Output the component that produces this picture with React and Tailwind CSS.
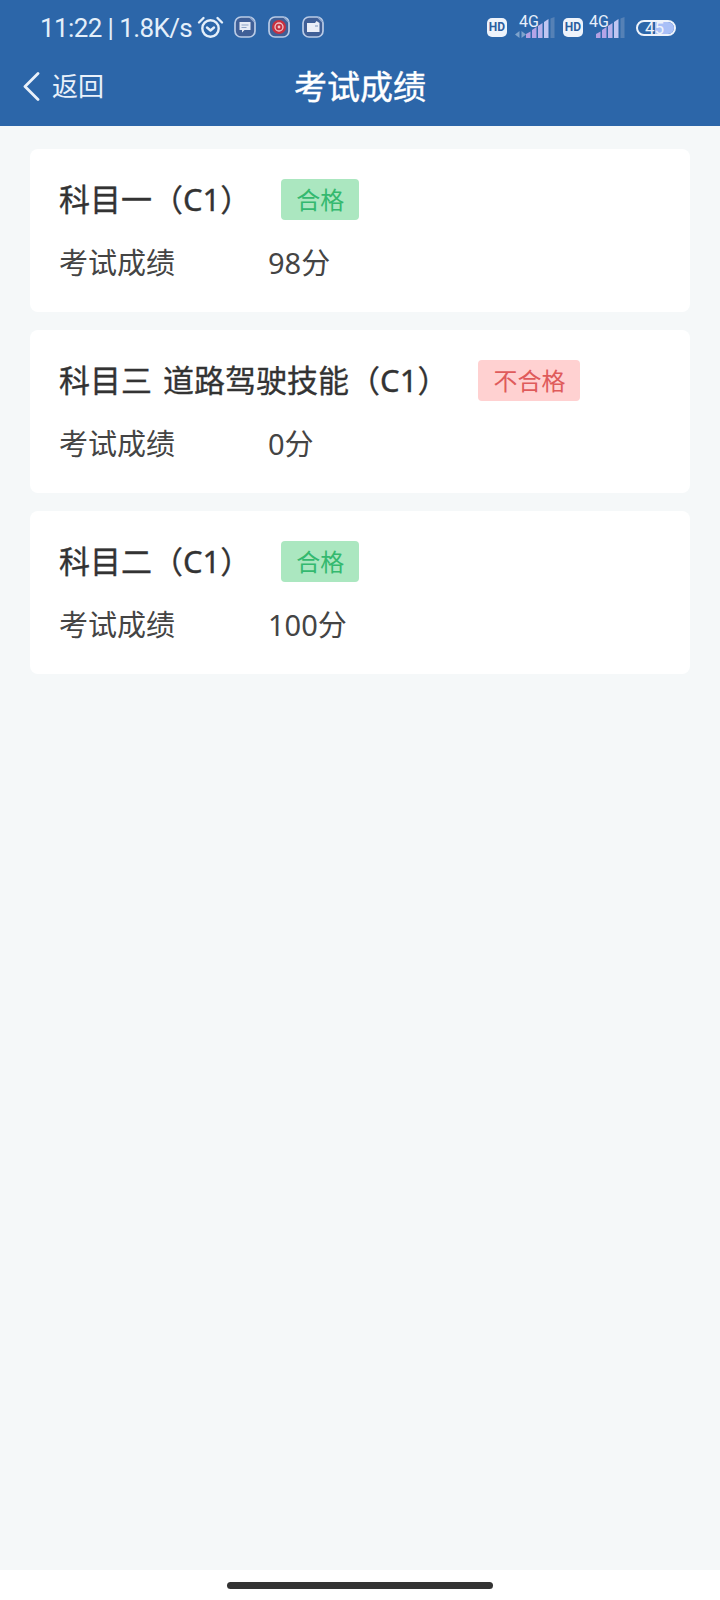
import React from "react";

const CJK = '"Noto Sans", "Noto Sans CJK SC", sans-serif';

const records = [
  { name: "科目一（C1）", score: "98分", passed: true },
  { name: "科目三 道路驾驶技能（C1）", score: "0分", passed: false },
  { name: "科目二（C1）", score: "100分", passed: true },
];

function Alarm() {
  return (
    <svg width="27" height="22" viewBox="0 0 27 22" fill="none" stroke="#e4effa" strokeWidth="2.4" strokeLinecap="round" strokeLinejoin="round">
      <circle cx="13.5" cy="12.5" r="8.2" />
      <path d="M10 11.5l3.5 3 3.5-3" />
      <path d="M2 6.5 6.5 2M25 6.5 20.5 2" />
    </svg>
  );
}

function AppTile({ children }) {
  return (
    <svg width="22" height="22" viewBox="0 0 22 22" fill="none">
      <rect x="1" y="1" width="20" height="20" rx="6" fill="#3f5f97" stroke="#b9cbe6" strokeWidth="1.7" />
      <path d="M16 1.5 20.5 6" stroke="#8ea7cf" strokeWidth="1.4" />
      {children}
    </svg>
  );
}

function HdBadge() {
  return (
    <span className="flex h-[19px] w-[20px] items-center justify-center rounded-[5px] bg-[#eef3fb] text-[12px] font-bold leading-none text-[#2c5d9f]">
      HD
    </span>
  );
}

function SignalBars() {
  return (
    <svg width="29" height="21" viewBox="0 0 29 21">
      <path d="M0 21v-4l4.5-2.5V21z" fill="#b4a0e2" />
      <path d="M6 21v-8l4.5-3v11z" fill="#b4a4e6" />
      <path d="M12 21V9l4.5-3v15z" fill="#b8b2ec" />
      <path d="M18 21V5l4.5-3v19z" fill="#c0c6f2" />
      <path d="M24.5 21V1.5L28.5 0v21z" fill="#5581b6" />
    </svg>
  );
}

function NetworkCell({ arrows }) {
  return (
    <div className="relative h-[38px] w-[40px]">
      <span className="absolute left-[2px] top-[5px] text-[16px] leading-[16px] text-[#e8f0fb]" style={{ fontFamily: "Roboto, sans-serif" }}>
        4G
      </span>
      {arrows && (
        <svg className="absolute left-[-2px] top-[22px]" width="11" height="7" viewBox="0 0 11 7" fill="#7ea3cc">
          <path d="M4.5 0v7L0 3.5zM6.5 0v7L11 3.5z" />
        </svg>
      )}
      <div className="absolute left-[9px] top-[8px]">
        <SignalBars />
      </div>
    </div>
  );
}

function StatusBar() {
  return (
    <div className="flex h-[54px] items-center pl-[40px] pr-[44px] text-[26px] leading-none text-[#e4effa]" style={{ fontFamily: "Roboto, sans-serif" }}>
      <span className="mt-[2px] tracking-[-0.6px]">11:22 | 1.8K/s</span>
      <div className="ml-[5px] flex items-center">
        <Alarm />
        <div className="ml-[10px] flex items-center gap-[12px]">
          <AppTile>
            <path d="M5.5 6h11v8h-6L8 16.5V14H5.5z" fill="#e6ecf7" />
            <path d="M7.5 9h7M7.5 11.5h5" stroke="#8da3c6" strokeWidth="1" />
          </AppTile>
          <AppTile>
            <circle cx="11" cy="11" r="7" fill="#c8303f" />
            <circle cx="11" cy="11" r="4" fill="none" stroke="#f0c5c9" strokeWidth="1.3" />
            <circle cx="11" cy="11" r="1.4" fill="#f0c5c9" />
          </AppTile>
          <AppTile>
            <path d="M5 7h8l1.5-2 3 2v9H5z" fill="#eaeef8" />
            <path d="M13 10h3" stroke="#8da3c6" strokeWidth="1.2" />
          </AppTile>
        </div>
      </div>
      <div className="ml-auto mt-[1px] flex h-[38px] items-start">
        <div className="mt-[9px]">
          <HdBadge />
        </div>
        <div className="ml-[10px]">
          <NetworkCell arrows />
        </div>
        <div className="ml-[6px] mt-[9px]">
          <HdBadge />
        </div>
        <div className="ml-[4px]">
          <NetworkCell />
        </div>
        <div className="relative ml-[9px] mt-[11px] flex h-[16px] w-[40px] items-center rounded-full border-2 border-[#eef3fb]">
          <div className="absolute bottom-0 right-0 top-0 w-[19px] rounded-r-full bg-[#a9c0f7]" />
          <span className="relative ml-[7px] text-[17px] leading-[12px] text-[#eef3fb]">45</span>
        </div>
      </div>
    </div>
  );
}

function NavBar() {
  return (
    <div className="relative flex h-[72px] items-start justify-center" style={{ fontFamily: CJK }}>
      <div className="absolute left-[23px] top-[18px] flex items-center text-[#eaf1fa]">
        <svg width="17" height="29" viewBox="0 0 17 29" fill="none" stroke="currentColor" strokeWidth="2.8" strokeLinecap="round" strokeLinejoin="round">
          <path d="M15 1.5 2 14.5l13 13" />
        </svg>
        <span className="ml-[12px] text-[26px] leading-[29px]">返回</span>
      </div>
      <h1 className="mt-[12px] text-[33px] font-normal leading-[42px] text-white [-webkit-text-stroke:0.4px_#ffffff]">考试成绩</h1>
    </div>
  );
}

function ScoreCard({ name, score, passed }) {
  return (
    <section className="h-[162.5px] rounded-[8px] bg-white px-[29px] pt-[30px] text-[#333333]">
      <div className="flex h-[41px] items-center">
        <h2 className="mt-[-1px] text-[31px] font-normal leading-[41px] [word-spacing:3px] [-webkit-text-stroke:0.35px_#333333]">{name}</h2>
        <span
          className={
            passed
              ? "ml-[30px] flex h-[41px] items-center rounded-[4px] bg-[#abe7c0] px-[15px] text-[24px] leading-none text-[#34b96f]"
              : "ml-[30px] flex h-[41px] items-center rounded-[4px] bg-[#ffd1d1] px-[15px] text-[24px] leading-none text-[#df5b5b]"
          }
        >
          {passed ? "合格" : "不合格"}
        </span>
      </div>
      <div className="mt-[22px] flex text-[29px] leading-[41px] text-[#444444]">
        <span className="w-[209px]">考试成绩</span>
        <span>{score}</span>
      </div>
    </section>
  );
}

export default function App() {
  return (
    <div className="flex h-[1600px] w-[720px] flex-col bg-[#f5f8f9]" style={{ fontFamily: CJK }}>
      <header className="h-[126px] bg-[#2c66a9]">
        <StatusBar />
        <NavBar />
      </header>
      <main className="flex flex-1 flex-col gap-[18.5px] px-[30px] pt-[23px]">
        {records.map((r) => (
          <ScoreCard key={r.name} {...r} />
        ))}
      </main>
      <footer className="flex h-[30px] items-start justify-center bg-white pt-[12px]">
        <div className="h-[7px] w-[266px] rounded-full bg-[#333333]" />
      </footer>
    </div>
  );
}
